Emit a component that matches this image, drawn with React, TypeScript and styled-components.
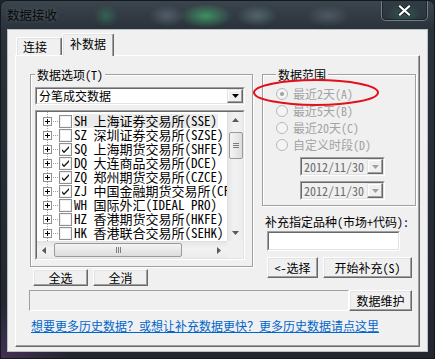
import styled, { createGlobalStyle } from 'styled-components';

const GlobalStyle = createGlobalStyle`
  html, body {
    margin: 0;
    padding: 0;
    background: #1f252c;
  }
  body {
    font-family: "Noto Sans Mono CJK SC", "Liberation Mono", "Noto Sans CJK SC", monospace;
    font-size: 12px;
    color: #000;
  }
`;

const Window = styled.div`
  width: 435px;
  height: 359px;
  box-sizing: border-box;
  display: flex;
  flex-direction: column;
  border: 1px solid #12181e;
  border-radius: 7px 7px 0 0;
  overflow: hidden;
  background:
    radial-gradient(ellipse 26px 12px at 205px 15px, rgba(70, 200, 120, 0.6), transparent),
    radial-gradient(ellipse 20px 11px at 256px 15px, rgba(140, 180, 180, 0.35), transparent),
    radial-gradient(ellipse 18px 11px at 166px 15px, rgba(140, 155, 175, 0.35), transparent),
    radial-gradient(ellipse 22px 11px at 327px 15px, rgba(140, 155, 175, 0.3), transparent),
    radial-gradient(ellipse 12px 11px at 105px 15px, rgba(60, 170, 110, 0.35), transparent),
    radial-gradient(ellipse 70px 60px at 0px 359px, rgba(110, 60, 130, 0.45), transparent),
    linear-gradient(#3b454e, #2a323a 28px, #22262f);
`;

const TitleBar = styled.div`
  height: 28px;
  display: flex;
  align-items: flex-start;
  justify-content: space-between;
`;

const Title = styled.div`
  margin: 7px 0 0 6px;
  font-family: "Noto Sans CJK SC", sans-serif;
  font-size: 12.5px;
  line-height: 14px;
  color: #05080a;
  text-shadow: 0 0 4px rgba(255, 255, 255, 0.22);
`;

const CloseButton = styled.div`
  width: 47px;
  height: 21px;
  margin: -1px 6px 0 0;
  box-sizing: border-box;
  border: 1px solid rgba(200, 215, 220, 0.45);
  border-top: none;
  border-radius: 0 0 5px 5px;
  background: radial-gradient(ellipse 18px 10px at 22px 14px, rgba(60, 150, 110, 0.35), transparent),
    rgba(40, 50, 58, 0.5);
  box-shadow: inset 0 0 0 1px rgba(0, 0, 0, 0.35);
  display: flex;
  align-items: center;
  justify-content: center;
`;

const Client = styled.div`
  flex: 1;
  margin: 0 6px 6px 6px;
  box-sizing: border-box;
  border: 1px solid #b9c0c6;
  background: #f0f0f0;
  padding: 3px 7px 4px 7px;
  display: flex;
  flex-direction: column;
`;

const TabRow = styled.div`
  height: 22px;
  display: flex;
  align-items: flex-end;
  padding-left: 1px;
`;

const Tab = styled.div<{ $active?: boolean }>`
  position: relative;
  z-index: ${p => (p.$active ? 1 : 0)};
  box-sizing: border-box;
  width: ${p => (p.$active ? 52 : 46)}px;
  height: ${p => (p.$active ? 23 : 18)}px;
  margin-bottom: ${p => (p.$active ? -1 : 0)}px;
  padding-left: ${p => (p.$active ? 7 : 6)}px;
  border: 1px solid;
  border-color: #fff #696969 transparent #fff;
  border-bottom: none;
  border-radius: 2px 2px 0 0;
  box-shadow: inset -1px 0 0 #a0a0a0, inset 1px 1px 0 #e3e3e3;
  background: #f0f0f0;
  line-height: ${p => (p.$active ? 20 : 18)}px;
  font-family: "Noto Sans CJK SC", sans-serif;
`;

const Panel = styled.div`
  position: relative;
  flex: 1;
  border: 1px solid;
  border-color: #fff #696969 #696969 #fff;
  box-shadow: inset -1px -1px 0 #a0a0a0;
  display: grid;
  grid-template-columns: 223px 154px;
  grid-template-rows: auto auto auto;
  column-gap: 9px;
  align-content: start;
  padding: 11px 0 0 14px;
`;

const Column = styled.div`
  display: flex;
  flex-direction: column;
  align-items: flex-start;
`;

const Group = styled.fieldset<{ $h: number }>`
  margin: 0;
  min-width: 0;
  width: 100%;
  height: ${p => p.$h}px;
  box-sizing: border-box;
  padding: ${p => (p.$h > 150 ? '5px 8px 0 4px' : '3px 0 0 13px')};
  border: 1px solid #a0a0a0;
  box-shadow: inset 1px 1px 0 #fff, 1px 1px 0 #fff;
`;

const Legend = styled.legend`
  padding: 0 2px;
  line-height: 15px;
  background: #f0f0f0;
`;

const Sunken = styled.div<{ $w: number; $h: number; $bg?: string }>`
  width: ${p => p.$w}px;
  height: ${p => p.$h}px;
  box-sizing: border-box;
  border: 1px solid;
  border-color: #a0a0a0 #fff #fff #a0a0a0;
  background: ${p => p.$bg || '#fff'};
  flex-shrink: 0;
`;

const SunkenInner = styled.div`
  height: 100%;
  box-sizing: border-box;
  border: 1px solid;
  border-color: #696969 #e3e3e3 #e3e3e3 #696969;
  display: flex;
  align-items: center;
`;

const ComboText = styled.span<{ $muted?: boolean }>`
  flex: 1;
  padding-left: 2px;
  line-height: 14px;
  white-space: nowrap;
  color: ${p => (p.$muted ? '#6d6d6d' : '#000')};
`;

const ArrowButton = styled.div`
  width: 16px;
  height: 100%;
  box-sizing: border-box;
  border: 1px solid;
  border-color: #e3e3e3 #696969 #696969 #e3e3e3;
  box-shadow: inset -1px -1px 0 #a0a0a0, inset 1px 1px 0 #fff;
  background: #f0f0f0;
  display: flex;
  align-items: center;
  justify-content: center;
`;

const ListInner = styled.div`
  height: 100%;
  box-sizing: border-box;
  border: 1px solid;
  border-color: #696969 #e3e3e3 #e3e3e3 #696969;
  display: grid;
  grid-template-columns: 190px 16px;
  grid-template-rows: 1fr 17px;
`;

const Rows = styled.div`
  overflow: hidden;
  padding-top: 2px;
  background-image: repeating-linear-gradient(to bottom, #a0a0a0 0 1px, transparent 1px 2px);
  background-size: 1px 100%;
  background-position: 10px 0;
  background-repeat: no-repeat;
`;

const TreeRow = styled.div`
  height: 14px;
  display: flex;
  align-items: center;
  padding-left: 6px;
  white-space: nowrap;
  & > * {
    flex-shrink: 0;
  }
`;

const Dots = styled.span`
  width: 6px;
  height: 1px;
  margin-left: 1px;
  background-image: repeating-linear-gradient(to right, #a0a0a0 0 1px, transparent 1px 2px);
`;

const RowText = styled.span<{ $focus?: boolean }>`
  margin-left: 1px;
  padding: 0 1px;
  font-size: 13px;
  line-height: 14px;
  background: ${p => (p.$focus ? '#ebebeb' : 'transparent')};
`;

const VScroll = styled.div`
  background: linear-gradient(to right, #e6e6e6, #f2f2f2 40%, #ececec);
  border-left: 1px solid #e0e0e0;
  display: flex;
  flex-direction: column;
  align-items: center;
`;

const ScrollArrow = styled.div<{ $grow?: boolean }>`
  height: 16px;
  display: flex;
  align-items: center;
  justify-content: center;
  margin-top: ${p => (p.$grow ? 'auto' : '0')};
`;

const VThumb = styled.div`
  width: 14px;
  height: 27px;
  margin-top: 4px;
  box-sizing: border-box;
  border: 1px solid #9a9a9a;
  border-radius: 2px;
  background: linear-gradient(to right, #f4f4f4, #e9e9e9 50%, #dcdcdc);
  display: flex;
  flex-direction: column;
  align-items: center;
  justify-content: center;
  gap: 1px;
`;

const GripLine = styled.span<{ $vertical?: boolean }>`
  width: ${p => (p.$vertical ? 1 : 6)}px;
  height: ${p => (p.$vertical ? 6 : 1)}px;
  background: #7d7d7d;
`;

const HScroll = styled.div`
  background: linear-gradient(#e6e6e6, #f2f2f2 40%, #ececec);
  border-top: 1px solid #e0e0e0;
  display: flex;
  align-items: center;
`;

const HThumb = styled.div`
  width: 128px;
  height: 14px;
  margin-left: 3px;
  box-sizing: border-box;
  border: 1px solid #9a9a9a;
  border-radius: 2px;
  background: linear-gradient(#f4f4f4, #e9e9e9 50%, #dcdcdc);
  display: flex;
  align-items: center;
  justify-content: center;
  gap: 1px;
`;

const Corner = styled.div`
  background: #f0f0f0;
`;

const Button = styled.div<{ $w: number; $h: number }>`
  width: ${p => p.$w}px;
  height: ${p => p.$h}px;
  box-sizing: border-box;
  border: 1px solid;
  border-color: #fff #696969 #696969 #fff;
  box-shadow: inset -1px -1px 0 #a0a0a0, inset 1px 1px 0 #e3e3e3;
  background: #f0f0f0;
  display: flex;
  align-items: center;
  justify-content: center;
  line-height: 14px;
  white-space: nowrap;
  flex-shrink: 0;
`;

const ButtonRow = styled.div<{ $top: number; $left: number }>`
  display: flex;
  gap: 5px;
  margin: ${p => p.$top}px 0 0 ${p => p.$left}px;
`;

const Radio = styled.div`
  height: 17px;
  display: flex;
  align-items: center;
  gap: 5px;
  color: #a3a3a3;
  line-height: 14px;
  white-space: nowrap;
`;

const DateStack = styled.div`
  display: flex;
  flex-direction: column;
  gap: 5px;
  margin: 4px 0 0 24px;
`;

const FieldLabel = styled.div`
  margin: 9px 0 0 3px;
  line-height: 14px;
  white-space: nowrap;
`;

const InputBox = styled.div`
  margin: 2px 0 0 5px;
`;

const BottomRow = styled.div`
  grid-column: 1 / -1;
  display: flex;
  margin: 4px 0 0 -1px;
`;

const StatusBox = styled.div`
  width: 320px;
  height: 21px;
  box-sizing: border-box;
  border: 1px solid;
  border-color: #a0a0a0 #fff #fff #a0a0a0;
  background: #f0f0f0;
`;

const LinkText = styled.a`
  grid-column: 1 / -1;
  margin: 8px 0 0 1px;
  line-height: 14px;
  color: #0066cc;
  text-decoration: underline;
  white-space: nowrap;
  cursor: pointer;
`;

const Annotation = styled.svg`
  position: absolute;
  left: 236px;
  top: 22px;
  pointer-events: none;
`;

const exchanges = [
  { code: 'SH', name: '上海证券交易所(SSE)', checked: false },
  { code: 'SZ', name: '深圳证券交易所(SZSE)', checked: false },
  { code: 'SQ', name: '上海期货交易所(SHFE)', checked: true },
  { code: 'DQ', name: '大连商品交易所(DCE)', checked: true },
  { code: 'ZQ', name: '郑州期货交易所(CZCE)', checked: true },
  { code: 'ZJ', name: '中国金融期货交易所(CFFEX)', checked: true },
  { code: 'WH', name: '国际外汇(IDEAL PRO)', checked: false },
  { code: 'HZ', name: '香港期货交易所(HKFE)', checked: false },
  { code: 'HK', name: '香港联合交易所(SEHK)', checked: false },
  { code: 'TW', name: '台湾证券交易所(TWSE)', checked: false },
];

const ranges = [
  { label: '最近2天(A)', on: true },
  { label: '最近5天(B)', on: false },
  { label: '最近20天(C)', on: false },
  { label: '自定义时段(D)', on: false },
];

function PlusBox() {
  return (
    <svg width="9" height="9" viewBox="0 0 9 9">
      <rect x="0.5" y="0.5" width="8" height="8" fill="#fff" stroke="#919191" />
      <path d="M2 4.5h5M4.5 2v5" stroke="#000" />
    </svg>
  );
}

function CheckBox({ checked }: { checked: boolean }) {
  return (
    <svg width="13" height="13" viewBox="0 0 13 13">
      <rect x="0.5" y="0.5" width="12" height="12" fill="#fff" stroke="#8e8f8f" />
      <rect x="1.5" y="1.5" width="10" height="10" fill="none" stroke="#f0f0f0" />
      {checked && <path d="M3 6l2 2.3 5-5.3v2L5 10.3 3 8z" fill="#1a1a1a" />}
    </svg>
  );
}

function RadioDot({ on }: { on: boolean }) {
  return (
    <svg width="12" height="12" viewBox="0 0 12 12">
      <circle cx="6" cy="6" r="5.5" fill="#f4f4f4" stroke="#b8b8b8" />
      {on && <circle cx="6" cy="6" r="2" fill="#a0a0a0" />}
    </svg>
  );
}

function Tri({ dir, color = '#000' }: { dir: 'up' | 'down' | 'left' | 'right'; color?: string }) {
  const d = {
    down: 'M0 0h7L3.5 4z',
    up: 'M0 4h7L3.5 0z',
    left: 'M4 0v7L0 3.5z',
    right: 'M0 0v7L4 3.5z',
  }[dir];
  const w = dir === 'up' || dir === 'down' ? 7 : 4;
  const h = dir === 'up' || dir === 'down' ? 4 : 7;
  return (
    <svg width={w} height={h} viewBox={`0 0 ${w} ${h}`}>
      <path d={d} fill={color} />
    </svg>
  );
}

function DateBox({ value }: { value: string }) {
  return (
    <Sunken $w={85} $h={19} $bg="#f0f0f0">
      <SunkenInner>
        <ComboText $muted>{value}</ComboText>
        <ArrowButton>
          <Tri dir="down" color="#a0a0a0" />
        </ArrowButton>
      </SunkenInner>
    </Sunken>
  );
}

export default function App() {
  return (
    <>
      <GlobalStyle />
      <Window>
        <TitleBar>
          <Title>数据接收</Title>
          <CloseButton>
            <svg width="13" height="11" viewBox="0 0 13 11">
              <path d="M2 1.5l9 8M11 1.5l-9 8" stroke="#1c2228" strokeWidth="4" strokeLinecap="square" />
              <path d="M2 1.5l9 8M11 1.5l-9 8" stroke="#fff" strokeWidth="2.2" strokeLinecap="square" />
            </svg>
          </CloseButton>
        </TitleBar>
        <Client>
          <TabRow>
            <Tab>连接</Tab>
            <Tab $active>补数据</Tab>
          </TabRow>
          <Panel>
            <Column>
              <Group $h={200}>
                <Legend>数据选项(T)</Legend>
                <Sunken $w={210} $h={18}>
                  <SunkenInner>
                    <ComboText>分笔成交数据</ComboText>
                    <ArrowButton>
                      <Tri dir="down" />
                    </ArrowButton>
                  </SunkenInner>
                </Sunken>
                <Sunken $w={210} $h={150} style={{ marginTop: 5 }}>
                  <ListInner>
                    <Rows>
                      {exchanges.map((ex, i) => (
                        <TreeRow key={ex.code}>
                          <PlusBox />
                          <Dots />
                          <CheckBox checked={ex.checked} />
                          <RowText $focus={i === 0}>
                            {ex.code} {ex.name}
                          </RowText>
                        </TreeRow>
                      ))}
                    </Rows>
                    <VScroll>
                      <ScrollArrow>
                        <Tri dir="up" color="#5a5a5a" />
                      </ScrollArrow>
                      <VThumb>
                        <GripLine />
                        <GripLine />
                        <GripLine />
                      </VThumb>
                      <ScrollArrow $grow>
                        <Tri dir="down" color="#5a5a5a" />
                      </ScrollArrow>
                    </VScroll>
                    <HScroll>
                      <ScrollArrow style={{ width: 14 }}>
                        <Tri dir="left" color="#5a5a5a" />
                      </ScrollArrow>
                      <HThumb>
                        <GripLine $vertical />
                        <GripLine $vertical />
                        <GripLine $vertical />
                      </HThumb>
                      <ScrollArrow $grow style={{ width: 16, marginLeft: 'auto' }}>
                        <Tri dir="right" color="#5a5a5a" />
                      </ScrollArrow>
                    </HScroll>
                    <Corner />
                  </ListInner>
                </Sunken>
              </Group>
              <ButtonRow $top={2} $left={3}>
                <Button $w={55} $h={17}>全选</Button>
                <Button $w={55} $h={17}>全消</Button>
              </ButtonRow>
            </Column>
            <Column>
              <Group $h={139}>
                <Legend>数据范围</Legend>
                {ranges.map(r => (
                  <Radio key={r.label}>
                    <RadioDot on={r.on} />
                    {r.label}
                  </Radio>
                ))}
                <DateStack>
                  <DateBox value="2012/11/30" />
                  <DateBox value="2012/11/30" />
                </DateStack>
              </Group>
              <FieldLabel>补充指定品种(市场+代码):</FieldLabel>
              <InputBox>
                <Sunken $w={133} $h={20}>
                  <SunkenInner />
                </Sunken>
              </InputBox>
              <ButtonRow $top={6} $left={5}>
                <Button $w={51} $h={21}>&lt;-选择</Button>
                <Button $w={89} $h={21}>开始补充(S)</Button>
              </ButtonRow>
            </Column>
            <BottomRow>
              <StatusBox />
              <Button $w={63} $h={21}>数据维护</Button>
            </BottomRow>
            <LinkText>想要更多历史数据？或想让补充数据更快？更多历史数据请点这里</LinkText>
            <Annotation width="130" height="30" viewBox="0 0 130 30">
              <ellipse cx="64" cy="14.5" rx="62" ry="12.5" fill="none" stroke="#e3101c" strokeWidth="2" />
            </Annotation>
          </Panel>
        </Client>
      </Window>
    </>
  );
}
